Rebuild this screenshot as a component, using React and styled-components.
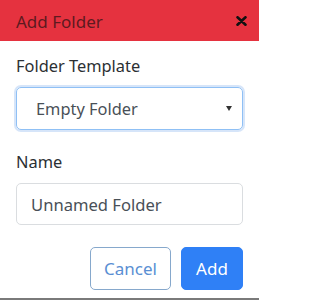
import React from "react";
import styled, { createGlobalStyle } from "styled-components";

const Global = createGlobalStyle`
  html, body { margin: 0; padding: 0; background: #fff; }
  body { font-family: "Noto Sans", "Open Sans", sans-serif; }
  * { box-sizing: border-box; }
`;

const Dialog = styled.div`
  width: 259px;
  height: 300px;
  display: flex;
  flex-direction: column;
  background: #fff;
  border-bottom: 2px solid #7a7a7a;
`;

const Header = styled.div`
  height: 41px;
  flex: none;
  background: #e5323f;
  display: flex;
  align-items: center;
  justify-content: space-between;
  padding: 0 12px 0 16px;
`;

const Title = styled.div`
  font-size: 17px;
  color: #5e1a20;
  line-height: 1;
  margin-top: 1px;
`;

const Close = styled.button`
  border: 0;
  background: none;
  padding: 0;
  width: 11px;
  height: 10px;
  display: flex;
  cursor: pointer;
`;

const Body = styled.div`
  flex: 1;
  padding: 13px 16px 0 16px;
  display: flex;
  flex-direction: column;
`;

const Label = styled.label`
  font-size: 16.4px;
  line-height: 24px;
  color: #2b2f33;
  margin-top: ${(p) => p.$top || 0}px;
  margin-bottom: 9px;
`;

const SelectBox = styled.div`
  height: 43px;
  border: 1px solid #8fc0f5;
  border-radius: 5px;
  box-shadow: 0 0 0 2px rgba(120, 170, 235, 0.3);
  display: flex;
  align-items: center;
  justify-content: space-between;
  padding: 0 10px 0 19px;
  font-size: 16.4px;
  color: #495057;
`;

const Caret = styled.span`
  width: 0;
  height: 0;
  border-left: 3px solid transparent;
  border-right: 3px solid transparent;
  border-top: 5px solid #333;
`;

const Input = styled.input`
  height: 42px;
  border: 1px solid #dadde0;
  border-radius: 5px;
  padding: 0 14px;
  font-family: inherit;
  font-size: 16.6px;
  color: #495057;
  outline: none;
  width: 100%;
`;

const Actions = styled.div`
  margin-top: 22px;
  display: flex;
  justify-content: flex-end;
  gap: 10px;
`;

const Button = styled.button`
  height: 43px;
  border-radius: 5px;
  font-family: inherit;
  font-size: 17px;
  padding: 0;
  width: ${(p) => p.$w}px;
  border: 1px solid ${(p) => (p.$primary ? "#2f80f6" : "#86a8cc")};
  background: ${(p) => (p.$primary ? "#2f80f6" : "#fff")};
  color: ${(p) => (p.$primary ? "#fff" : "#5a8fd3")};
  cursor: pointer;
`;

export default function App() {
  return (
    <>
      <Global />
      <Dialog>
        <Header>
          <Title>Add Folder</Title>
          <Close aria-label="Close">
            <svg width="11" height="10" viewBox="0 0 11 10">
              <path d="M1.5 1.3 L9.5 8.7 M9.5 1.3 L1.5 8.7" stroke="#111" strokeWidth="2.6" strokeLinecap="round" />
            </svg>
          </Close>
        </Header>
        <Body>
          <Label>Folder Template</Label>
          <SelectBox>
            <span>Empty Folder</span>
            <Caret />
          </SelectBox>
          <Label $top={20}>Name</Label>
          <Input defaultValue="Unnamed Folder" />
          <Actions>
            <Button $w={81}>Cancel</Button>
            <Button $w={62} $primary>Add</Button>
          </Actions>
        </Body>
      </Dialog>
    </>
  );
}
